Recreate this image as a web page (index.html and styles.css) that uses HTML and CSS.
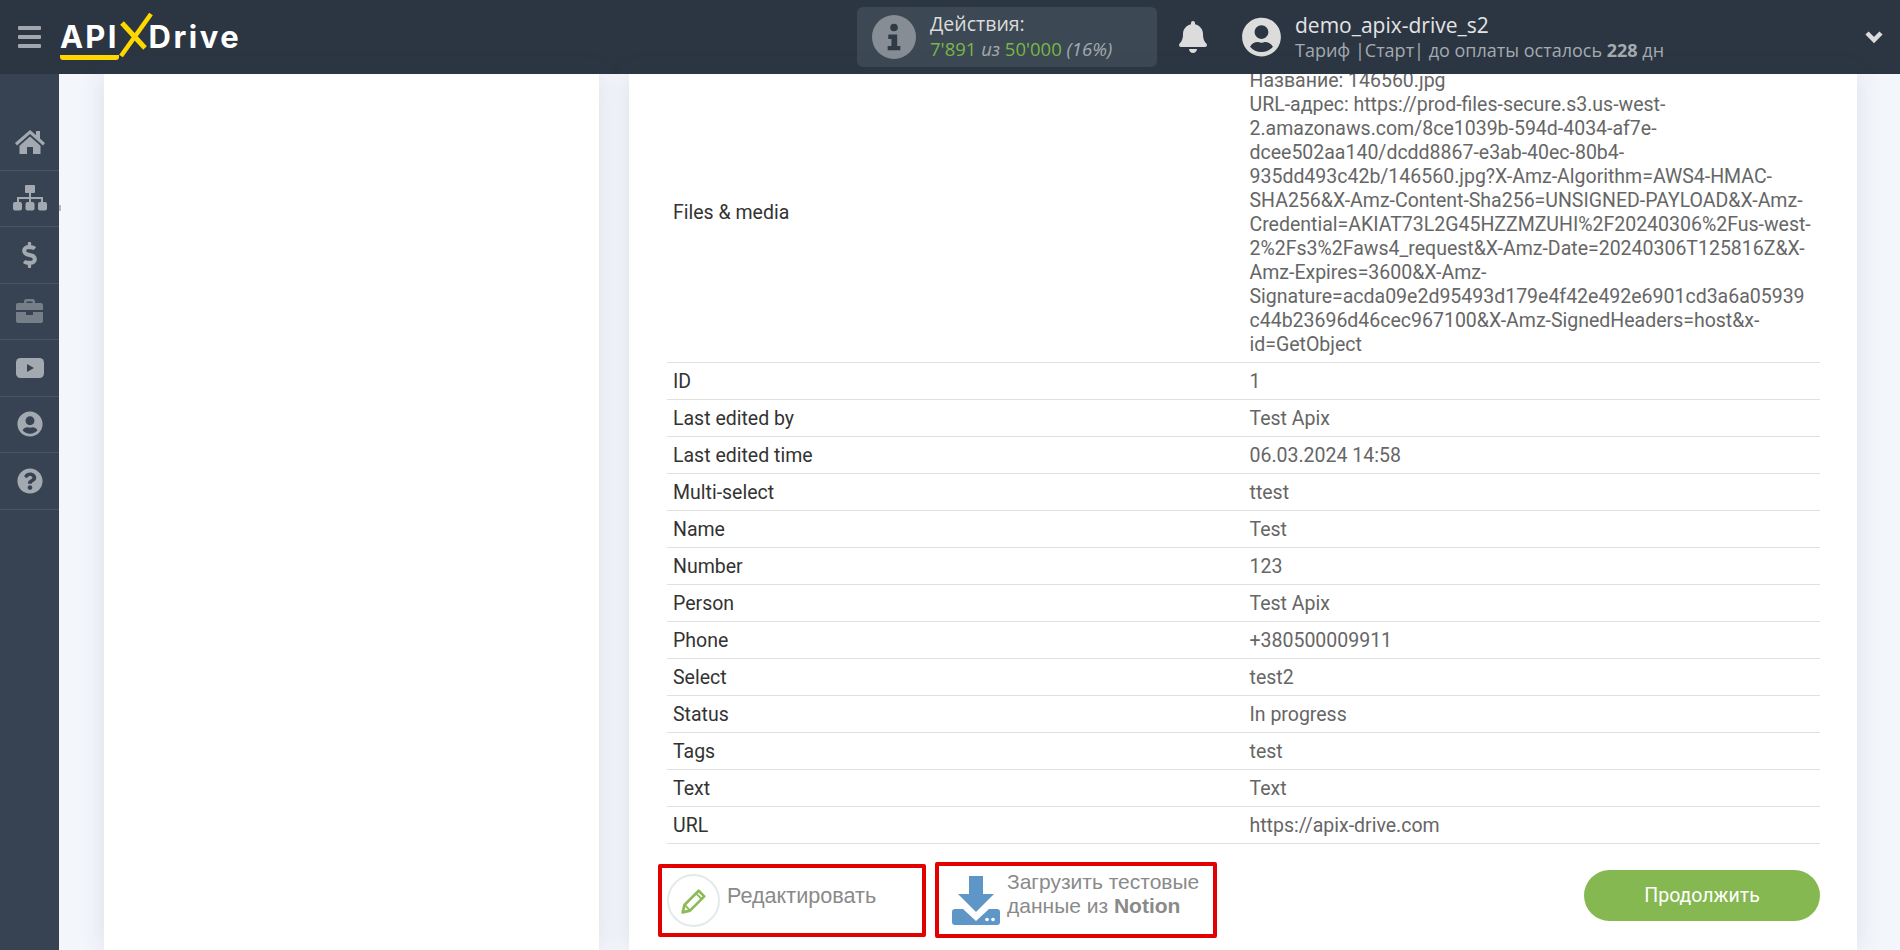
FILE: index.html
```html
<!DOCTYPE html>
<html lang="en">
<head>
    <meta charset="UTF-8">
    <meta name="viewport" content="width=device-width, initial-scale=1.0">
    <title>ApiX-Drive</title>
    <link rel="stylesheet" href="styles.css">
</head>
<body>
    <header class="topbar">
        <div class="burger"><span></span><span></span><span></span></div>
        <div class="logo">
            <span class="logo-api">API</span>
            <svg class="logo-x" viewBox="0 0 35 44" width="35" height="44">
                <line x1="4" y1="10" x2="27" y2="35" stroke="#ffd800" stroke-width="5"/>
                <line x1="33" y1="1" x2="3" y2="43" stroke="#ffd800" stroke-width="4.5"/>
            </svg>
            <span class="logo-drive">Drive</span>
        </div>
        <div class="stats">
            <div class="stats-icon">
                <svg viewBox="0 0 24 44" width="16" height="28">
                    <circle cx="12" cy="7" r="6" fill="#2f3a45"/>
                    <path d="M3 18h14v18h5v7H2v-7h6V25H3z" fill="#2f3a45"/>
                </svg>
            </div>
            <div class="stats-text">
                <div class="stats-title">Действия:</div>
                <div class="stats-line"><b>7'891</b> <i>из</i> <b>50'000</b> <i>(16%)</i></div>
            </div>
        </div>
        <svg class="bell" viewBox="0 0 448 512" width="28" height="32">
            <path fill="#dcdcdc" d="M224 512c35.32 0 63.97-28.65 63.97-64H160.03c0 35.35 28.65 64 63.97 64zm215.39-149.71c-19.32-20.76-55.47-51.99-55.47-154.29 0-77.7-54.48-139.9-127.94-155.16V32c0-17.67-14.32-32-31.98-32s-31.98 14.33-31.98 32v20.84C118.56 68.1 64.08 130.3 64.08 208c0 102.3-36.15 133.53-55.47 154.29-6 6.45-8.66 14.16-8.61 21.71.11 16.4 12.98 32 32.1 32h383.8c19.12 0 32-15.6 32.1-32 .05-7.55-2.61-15.27-8.61-21.71z"/>
        </svg>
        <svg class="avatar" viewBox="0 0 496 512" width="39" height="40">
            <path fill="#dcdcdc" d="M248 8C111 8 0 119 0 256s111 248 248 248 248-111 248-248S385 8 248 8zm0 96c48.6 0 88 39.4 88 88s-39.4 88-88 88-88-39.4-88-88 39.4-88 88-88zm0 344c-58.7 0-111.3-26.6-146.5-68.2 18.8-35.4 55.6-59.8 98.5-59.8 2.4 0 4.8.4 7.1 1.1 13 4.2 26.6 6.9 40.9 6.9 14.3 0 28-2.7 40.9-6.9 2.3-.7 4.7-1.1 7.1-1.1 42.9 0 79.7 24.4 98.5 59.8C359.3 421.4 306.7 448 248 448z"/>
        </svg>
        <div class="account">
            <div class="account-name">demo_apix-drive_s2</div>
            <div class="account-plan">Тариф |Старт| до оплаты осталось <b>228</b> дн</div>
        </div>
        <svg class="chevron" viewBox="0 0 20 14" width="20" height="14">
            <polyline points="3,3 10,10 17,3" fill="none" stroke="#dcdcdc" stroke-width="4.5"/>
        </svg>
    </header>

    <div class="page">
        <nav class="sidebar">
            <a class="nav-item">
                <svg viewBox="0 0 30 26" width="30" height="26">
                    <path fill="#a3a9b0" d="M15 1 0 14l2 2.4L15 5l13 11.4 2-2.4-5-4.4V2h-4v4z"/>
                    <path fill="#a3a9b0" d="M15 7.5 4.5 16.7V25h7.5v-7h6v7h7.500v-8.300z"/>
                </svg>
            </a>
            <a class="nav-item nav-tabbed">
                <svg viewBox="0 0 34 26" width="34" height="26">
                    <rect x="12" y="0" width="10" height="8" rx="1" fill="#a3a9b0"/>
                    <path d="M17 8v10M5 18v-5h24v5" stroke="#a3a9b0" stroke-width="2" fill="none"/>
                    <rect x="0" y="17" width="9" height="8.500" rx="2" fill="#a3a9b0"/>
                    <rect x="12.500" y="17" width="9" height="8.500" rx="2" fill="#a3a9b0"/>
                    <rect x="25" y="17" width="9" height="8.500" rx="2" fill="#a3a9b0"/>
                </svg>
            </a>
            <a class="nav-item">
                <svg viewBox="0 0 288 512" width="15" height="26">
                    <path fill="#a3a9b0" d="M209.2 233.4l-108-31.6C88.7 198.2 80 186.5 80 173.5c0-16.3 13.2-29.500 29.500-29.500h66.300c12.200 0 24.200 3.700 34.200 10.500 6.100 4.100 14.300 3.100 19.500-2l34.800-34c7.100-6.900 6.100-18.400-1.800-24.500C238 74.800 207.400 64.100 176 64V16c0-8.800-7.200-16-16-16h-32c-8.800 0-16 7.200-16 16v48h-2.500C45.800 64-5.400 118.700.5 183.600c4.200 46.100 39.400 83.600 83.800 96.600l102.500 30c12.500 3.700 21.200 15.300 21.200 28.300 0 16.300-13.200 29.500-29.500 29.500h-66.300C100 368 88 364.300 78 357.500c-6.100-4.100-14.300-3.100-19.500 2l-34.800 34c-7.100 6.900-6.100 18.400 1.800 24.500 24.500 19.200 55.100 29.900 86.500 30v48c0 8.800 7.200 16 16 16h32c8.800 0 16-7.200 16-16v-48.200c46.600-.9 90.300-28.600 105.700-72.700 21.500-61.600-14.600-124.800-72.500-141.700z"/>
                </svg>
            </a>
            <a class="nav-item">
                <svg viewBox="0 0 27 24" width="27" height="24">
                    <path fill="#767e88" d="M8 4V2.500A2.500 2.500 0 0 1 10.500 0h6A2.500 2.500 0 0 1 19 2.500V4h6a2 2 0 0 1 2 2v5H0V6a2 2 0 0 1 2-2zm2.500 0h6V2.500h-6z"/>
                    <path fill="#767e88" d="M0 13h10v3h7v-3h10v9a2 2 0 0 1-2 2H2a2 2 0 0 1-2-2z"/>
                </svg>
            </a>
            <a class="nav-item">
                <svg viewBox="0 0 28 20" width="28" height="20">
                    <rect width="28" height="20" rx="4.500" fill="#a3a9b0"/>
                    <polygon points="11,6 11,14 18,10" fill="#374352"/>
                </svg>
            </a>
            <a class="nav-item">
                <svg viewBox="0 0 496 512" width="26" height="26">
                    <path fill="#a3a9b0" d="M248 8C111 8 0 119 0 256s111 248 248 248 248-111 248-248S385 8 248 8zm0 96c48.6 0 88 39.4 88 88s-39.4 88-88 88-88-39.4-88-88 39.4-88 88-88zm0 344c-58.7 0-111.3-26.6-146.5-68.2 18.8-35.4 55.6-59.8 98.5-59.8 2.4 0 4.8.4 7.1 1.1 13 4.2 26.6 6.9 40.9 6.900 14.300 0 28-2.700 40.900-6.900 2.300-.7 4.700-1.100 7.100-1.100 42.900 0 79.700 24.400 98.500 59.800C359.300 421.400 306.700 448 248 448z"/>
                </svg>
            </a>
            <a class="nav-item">
                <svg viewBox="0 0 512 512" width="26" height="26">
                    <path fill="#a3a9b0" d="M504 256c0 136.997-111.043 248-248 248S8 392.997 8 256C8 119.083 119.043 8 256 8s248 111.083 248 248zM262.655 90c-54.497 0-89.255 22.957-116.549 63.758-3.536 5.286-2.353 12.415 2.715 16.258l34.699 26.31c5.205 3.947 12.621 3.008 16.665-2.122 17.864-22.658 30.113-35.797 57.303-35.797 20.429 0 45.698 13.148 45.698 32.958 0 14.976-12.363 22.667-32.534 33.976C247.128 238.528 216 254.941 216 296v4c0 6.627 5.373 12 12 12h56c6.627 0 12-5.373 12-12v-1.333c0-28.462 83.186-29.647 83.186-106.667 0-58.002-60.165-102-116.531-102zM256 338c-25.365 0-46 20.635-46 46 0 25.364 20.635 46 46 46s46-20.636 46-46c0-25.365-20.635-46-46-46z"/>
                </svg>
            </a>
        </nav>

        <main class="content">
            <section class="card card-left"></section>
            <section class="card card-right">
                <table class="fields">
                    <tr>
                        <td>Files &amp; media</td>
                        <td>Название: 146560.jpg<br>URL-адрес: https://prod-files-secure.s3.us-west-2.amazonaws.com/8ce1039b-594d-4034-af7e-dcee502aa140/dcdd8867-e3ab-40ec-80b4-935dd493c42b/146560.jpg?X-Amz-Algorithm=AWS4-HMAC-SHA256&amp;X-Amz-Content-Sha256=UNSIGNED-PAYLOAD&amp;X-Amz-Credential=AKIAT73L2G45HZZMZUHI%2F20240306%2Fus-west-2%2Fs3%2Faws4_request&amp;X-Amz-Date=20240306T125816Z&amp;X-Amz-Expires=3600&amp;X-Amz-Signature=acda09e2d95493d179e4f42e492e6901cd3a6a05939c44b23696d46cec967100&amp;X-Amz-SignedHeaders=host&amp;x-id=GetObject</td>
                    </tr>
                    <tr><td>ID</td><td>1</td></tr>
                    <tr><td>Last edited by</td><td>Test Apix</td></tr>
                    <tr><td>Last edited time</td><td>06.03.2024 14:58</td></tr>
                    <tr><td>Multi-select</td><td>ttest</td></tr>
                    <tr><td>Name</td><td>Test</td></tr>
                    <tr><td>Number</td><td>123</td></tr>
                    <tr><td>Person</td><td>Test Apix</td></tr>
                    <tr><td>Phone</td><td>+380500009911</td></tr>
                    <tr><td>Select</td><td>test2</td></tr>
                    <tr><td>Status</td><td>In progress</td></tr>
                    <tr><td>Tags</td><td>test</td></tr>
                    <tr><td>Text</td><td>Text</td></tr>
                    <tr><td>URL</td><td>https://apix-drive.com</td></tr>
                </table>
                <div class="actions">
                    <a class="action action-edit">
                        <span class="edit-circle">
                            <svg viewBox="0 0 24 24" width="32" height="32">
                                <path d="M3.500 20.500l1.300-5.500L15.500 4.300l4.200 4.200L9 19.200z" fill="none" stroke="#8cbb55" stroke-width="2" stroke-linejoin="round"/>
                                <path d="M13.500 6.300l4.200 4.200M5 15l4 4" fill="none" stroke="#8cbb55" stroke-width="1.400"/>
                            </svg>
                        </span>
                        <span class="edit-label">Редактировать</span>
                    </a>
                    <a class="action action-load">
                        <svg viewBox="0 0 48 49" width="48" height="49">
                            <path fill="#5f96c8" d="M17 0h14v18h11L24 36 6 18h11z"/>
                            <path fill="#5f96c8" d="M3 33h8l13 12 13-12h8a3 3 0 0 1 3 3v10a3 3 0 0 1-3 3H3a3 3 0 0 1-3-3V36a3 3 0 0 1 3-3z"/>
                            <circle cx="35" cy="43.500" r="1.800" fill="#fff"/>
                            <circle cx="41" cy="43.500" r="1.800" fill="#fff"/>
                        </svg>
                        <span class="load-label">Загрузить тестовые<br>данные из <b>Notion</b></span>
                    </a>
                    <a class="btn-next">Продолжить</a>
                </div>
            </section>
        </main>
    </div>
</body>
</html>
```

FILE: styles.css
```css
* {
    box-sizing: border-box;
}
html, body {
    height: 100%;
}
body {
    margin: 0;
    display: flex;
    flex-direction: column;
    overflow: hidden;
    font-family: 'Roboto', sans-serif;
    background: #f3f6fb;
}

/* top bar */
.topbar {
    height: 74px;
    flex: none;
    display: flex;
    align-items: center;
    background: #2c3643;
    color: #dcdcdc;
}
.burger {
    width: 23px;
    margin-left: 18px;
    display: flex;
    flex-direction: column;
    gap: 5px;
}
.burger span {
    height: 4px;
    border-radius: 1px;
    background: #a3a7ad;
}
.logo {
    margin-left: 19px;
    width: 181px;
    padding-bottom: 2px;
    display: flex;
    align-items: center;
    font-family: 'Inter', sans-serif;
    font-weight: 700;
    font-size: 31px;
    color: #fff;
}
.logo-api {
    position: relative;
    letter-spacing: 2.2px;
}
.logo-api::after {
    content: "";
    position: absolute;
    left: 0;
    right: 0;
    bottom: -5px;
    height: 5px;
    background: #ffd800;
    border-radius: 0 0 3px 3px;
}
.logo-x {
    margin: -2px -4px 0 -1px;
    flex: none;
}
.logo-drive {
    letter-spacing: 2.5px;
}
.stats {
    width: 300px;
    height: 60px;
    margin-left: 616px;
    padding-left: 15px;
    display: flex;
    align-items: center;
    background: #3c4853;
    border-radius: 6px;
    font-family: 'Open Sans', sans-serif;
}
.stats-icon {
    width: 44px;
    height: 44px;
    border-radius: 50%;
    background: #868d95;
    display: flex;
    align-items: center;
    justify-content: center;
}
.stats-text {
    margin-left: 14px;
}
.stats-title {
    font-size: 19.5px;
    line-height: 25px;
    color: #dcdcdc;
    margin-top: -2px;
}
.stats-line {
    font-size: 18.5px;
    line-height: 25px;
    color: #a5abb0;
}
.stats-line b {
    font-weight: 400;
    color: #7ab648;
}
.bell {
    margin-left: 22px;
}
.avatar {
    margin-left: 35px;
}
.account {
    margin-left: 14px;
    font-family: 'Open Sans', sans-serif;
}
.account-name {
    font-size: 21px;
    line-height: 27px;
    color: #e4e4e4;
}
.account-plan {
    font-size: 18px;
    line-height: 23px;
    color: #a5abb0;
}
.chevron {
    margin-left: auto;
    margin-right: 16px;
}

/* page body */
.page {
    flex: 1;
    min-height: 0;
    display: flex;
}
.sidebar {
    width: 59px;
    flex: none;
    padding-top: 40px;
    background: #374352;
}
.nav-item {
    position: relative;
    height: 56.5px;
    display: flex;
    align-items: center;
    justify-content: center;
    border-bottom: 1px solid #4a5563;
}
.nav-tabbed::after {
    content: "";
    position: absolute;
    right: -2px;
    top: 34px;
    width: 2px;
    height: 6px;
    background: #b5b9bf;
}
.content {
    flex: 1;
    min-width: 0;
    display: flex;
    gap: 30px;
    padding: 0 43px 0 45px;
}
.card {
    background: #fff;
    box-shadow: 0 0 25px rgba(60, 70, 90, 0.12);
}
.card-left {
    width: 495px;
    flex: none;
}
.card-right {
    flex: 1;
    min-width: 0;
    padding: 0 37px 12px 38px;
    display: flex;
    flex-direction: column;
    justify-content: flex-end;
    overflow: hidden;
}

/* data table */
.fields {
    width: 100%;
    flex: none;
    table-layout: fixed;
    border-collapse: collapse;
    font-size: 19.5px;
    line-height: 24px;
}
.fields td {
    padding: 7px 6px 5px;
    border-bottom: 1px solid #e0e0e0;
    vertical-align: middle;
    word-break: break-word;
    color: #666;
}
.fields td:first-child {
    color: #333;
}

/* buttons under the table */
.actions {
    flex: none;
    height: 94px;
    padding-top: 18px;
    display: flex;
    align-items: flex-start;
    margin-left: -9px;
}
.action {
    display: flex;
    align-items: center;
    border: 4px solid #e30000;
    border-radius: 2px;
    font-family: 'Liberation Sans', sans-serif;
    font-size: 21px;
    line-height: 24px;
    color: #8a8a8a;
}
.action-edit {
    width: 268px;
    height: 73px;
    margin-top: 2px;
    padding-left: 5px;
}
.edit-circle {
    width: 53px;
    height: 53px;
    margin-right: 7px;
    border: 2px solid #e3eaea;
    border-radius: 50%;
    display: flex;
    align-items: center;
    justify-content: center;
}
.edit-label {
    font-size: 21.6px;
    margin-bottom: 10px;
}
.action-load {
    width: 282px;
    height: 76px;
    margin-left: 9px;
    padding-left: 13px;
}
.load-label {
    margin-left: 7px;
    margin-bottom: 12px;
}
.btn-next {
    width: 236px;
    height: 51px;
    margin-top: 8px;
    margin-left: auto;
    border-radius: 26px;
    background: #86b851;
    color: #fff;
    font-size: 19.5px;
    display: flex;
    align-items: center;
    justify-content: center;
}
```
